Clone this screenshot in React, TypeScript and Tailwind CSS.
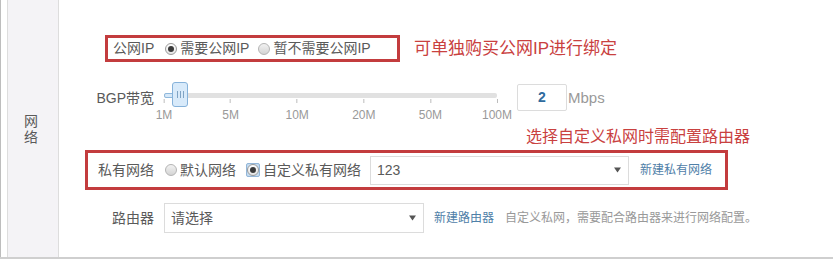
import React from "react";

const FONT = { fontFamily: '"Liberation Sans", "Noto Sans CJK SC", sans-serif' };

const TICKS = ["1M", "5M", "10M", "20M", "50M", "100M"];

function Radio({ checked }: { checked?: boolean }) {
  return (
    <span
      className={`flex h-[12px] w-[12px] shrink-0 items-center justify-center rounded-full border ${
        checked
          ? "border-[#9a9a9a] bg-gradient-to-b from-[#ffffff] to-[#e4e4e4]"
          : "border-[#b4b4b4] bg-gradient-to-b from-[#f2f2f2] to-[#d4d4d4]"
      }`}
    >
      {checked && <span className="h-[6px] w-[6px] rounded-full bg-[#3a3a3a]" />}
    </span>
  );
}

function Arrow() {
  return (
    <svg width="7" height="6" viewBox="0 0 7 6" className="shrink-0">
      <path d="M0 0.5 L7 0.5 L3.5 5.5 Z" fill="#555" />
    </svg>
  );
}

function Select({ value, width, height }: { value: string; width: string; height: string }) {
  return (
    <div
      className={`flex ${width} ${height} shrink-0 items-center justify-between border border-[#dcdcdc] bg-white pl-[6px] pr-[7px] text-[14px] text-[#5a5a5a]`}
    >
      <span>{value}</span>
      <Arrow />
    </div>
  );
}

export default function App() {
  return (
    <div style={FONT} className="h-[260px] w-[833px] bg-white">
      <div className="flex h-[259px] border-b-2 border-[#cfcfcf]">
        {/* left frame */}
        <div className="w-[7px] shrink-0 border-l border-[#bdbdbd]" />
        <div className="flex w-[52px] shrink-0 items-center justify-center border-x border-[#dddddd] bg-[#f4f3f6] pr-[4px]">
          <div className="w-[14px] text-[14px] leading-[16px] text-[#5a5a5a]">网络</div>
        </div>

        {/* content */}
        <div className="flex flex-1 flex-col">
          {/* public IP */}
          <div className="mt-[35px] flex items-center">
            <div className="ml-[46px] flex h-[27px] w-[295px] items-center border-[3px] border-[#c33c3e] pl-[5px] text-[14px] text-[#5a5a5a]">
              <span>公网IP</span>
              <span className="ml-[11px]"><Radio checked /></span>
              <span className="ml-[3px]">需要公网IP</span>
              <span className="ml-[9px]"><Radio /></span>
              <span className="ml-[3px]">暂不需要公网IP</span>
            </div>
            <span className="ml-[14px] text-[17px] leading-[20px] text-[#c9413f]">可单独购买公网IP进行绑定</span>
          </div>

          {/* bandwidth slider */}
          <div className="mt-[20px] flex h-[40px] items-start">
            <div className="w-[95px] shrink-0 pt-[6px] text-right text-[14px] leading-[20px] text-[#5a5a5a]">BGP带宽</div>
            <div className="relative ml-[10px] h-[40px] w-[333px] shrink-0">
              <div className="absolute left-0 right-0 top-[11px] h-[5px] rounded-[2px] bg-[#e1e1e1]" />
              <div className="absolute left-0 top-[11px] h-[5px] w-[10px] rounded-l-[2px] border border-[#8fb8dc] bg-[#d6e8f8]" />
              {TICKS.map((t, i) => (
                <div
                  key={t}
                  className="absolute top-[17px] flex -translate-x-1/2 flex-col items-center"
                  style={{ left: `${(i * 333) / 5}px` }}
                >
                  <div className="h-[4px] w-px bg-[#bdbdbd]" />
                  <div className="mt-[5px] text-[12px] leading-[14px] text-[#999]">{t}</div>
                </div>
              ))}
              <div className="absolute left-[8px] top-0 flex h-[25px] w-[16px] items-center justify-center gap-[2px] rounded-[3px] border border-[#86b2da] bg-[#d8eafa]">
                <span className="h-[7px] w-px bg-[#7fa3c4]" />
                <span className="h-[7px] w-px bg-[#7fa3c4]" />
                <span className="h-[7px] w-px bg-[#7fa3c4]" />
              </div>
            </div>
            <div className="ml-[20px] mt-[2px] flex h-[27px] w-[50px] shrink-0 items-center justify-center rounded-[2px] border border-[#dcdcdc] text-[14px] font-bold text-[#2f6b9e]">
              2
            </div>
            <span className="ml-[1px] pt-[6px] text-[15px] leading-[20px] text-[#999]">Mbps</span>
          </div>

          {/* note */}
          <div className="mt-[5px] pl-[467px] text-[16px] leading-[20px] text-[#c9413f]">选择自定义私网时需配置路由器</div>

          {/* private network */}
          <div className="mt-[3px] flex">
            <div className="ml-[26px] flex h-[40px] w-[643px] items-center border-[3px] border-[#c33c3e] pl-[10px] text-[14px] text-[#5a5a5a]">
              <span>私有网络</span>
              <span className="ml-[11px]"><Radio /></span>
              <span className="ml-[3px]">默认网络</span>
              <span className="ml-[10px] flex h-[14px] w-[14px] items-center justify-center rounded-[2px] border border-[#93b6d8] bg-[#c4dbf0]">
                <Radio checked />
              </span>
              <span className="ml-[3px]">自定义私有网络</span>
              <span className="ml-[9px]">
                <Select value="123" width="w-[259px]" height="h-[29px]" />
              </span>
              <span className="ml-[11px] text-[12px] text-[#4f80a8]">新建私有网络</span>
            </div>
          </div>

          {/* router */}
          <div className="mt-[13px] flex items-center">
            <div className="w-[95px] shrink-0 text-right text-[14px] text-[#5a5a5a]">路由器</div>
            <span className="ml-[10px]">
              <Select value="请选择" width="w-[260px]" height="h-[30px]" />
            </span>
            <span className="ml-[10px] text-[12px] text-[#4f80a8]">新建路由器</span>
            <span className="ml-[11px] text-[12px] text-[#999]">自定义私网，需要配合路由器来进行网络配置。</span>
          </div>
        </div>
      </div>
    </div>
  );
}
